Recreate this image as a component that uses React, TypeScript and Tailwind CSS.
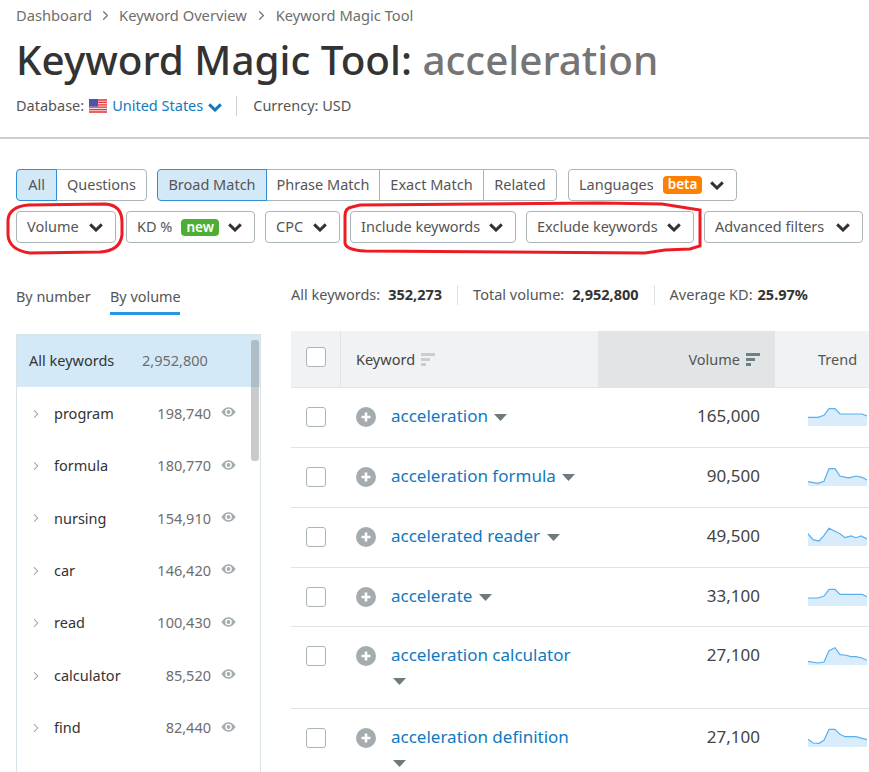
import React from 'react';
import { ChevronRight } from 'lucide-react';

const FONT = "font-['Noto_Sans','Open_Sans',sans-serif]";

const KEYWORD_ROWS = [
  { name: 'acceleration', volume: '165,000', h: 'h-[60px]', pts: '0,11.3 10,11.3 16,9.3 21,2.7 27,2.7 32,8 54,8 59,10' },
  { name: 'acceleration formula', volume: '90,500', h: 'h-[60px]', pts: '0,15.7 10,17.3 16,15.3 21,2.7 27,2.7 32,10 39,11.7 42,11.7 48,10 54,11.3 59,14' },
  { name: 'accelerated reader', volume: '49,500', h: 'h-[60px]', pts: '0,7.7 5,13.7 11,15 16,9.3 21,2.3 27,5.3 32,7.7 37,11.7 43,10 48,11.7 53,10 59,13' },
  { name: 'accelerate', volume: '33,100', h: 'h-[59px]', pts: '0,12 10,12 16,10 21,3.3 27,3.3 32,8.3 54,8.3 59,10.7' },
  { name: 'acceleration calculator', volume: '27,100', h: 'h-[82px]', pts: '0,16.3 10,18 16,17 21,5.7 27,2.7 32,9.7 37,10 43,11.7 48,11.7 54,13 59,15.3' },
  { name: 'acceleration definition', volume: '27,100', h: 'h-[82px]', pts: '0,12.3 5,16 11,16.3 16,13.3 21,2.3 27,2.3 32,7.3 37,9.7 48,9.7 54,11.3 59,12.7' },
];

const SIDE_ROWS = [
  ['program', '198,740'],
  ['formula', '180,770'],
  ['nursing', '154,910'],
  ['car', '146,420'],
  ['read', '100,430'],
  ['calculator', '85,520'],
  ['find', '82,440'],
];

const Chevron = ({ className = 'text-[#333]' }: { className?: string }) => (
  <svg width="14" height="9" viewBox="0 0 14 9" fill="none" stroke="currentColor" strokeWidth="3" className={`shrink-0 ${className}`}>
    <path d="M1.2 1.4L7 7L12.8 1.4" />
  </svg>
);

const FilterButton = ({ label, width, badge }: { label: string; width: string; badge?: React.ReactNode }) => (
  <button className={`${width} h-[32px] pl-[10px] pr-[12px] flex items-center justify-between border border-[#abb5b8] rounded-[4px] text-[#555] text-[14.5px] bg-white`}>
    <span className="flex items-center gap-[9px] whitespace-nowrap">{label}{badge}</span>
    <Chevron />
  </button>
);

const Segment = ({ label, width, active, first, last }: { label: string; width: string; active?: boolean; first?: boolean; last?: boolean }) => (
  <div
    className={`${width} h-[32px] flex items-center justify-center text-[14.5px] text-[#555] border whitespace-nowrap -ml-px first:ml-0
      ${active ? 'bg-[#d3e9f8] border-[#2d8fd5] z-10' : 'bg-white border-[#abb5b8]'}
      ${first ? 'rounded-l-[4px]' : ''} ${last ? 'rounded-r-[4px]' : ''}`}
  >
    {label}
  </div>
);

const SortIcon = ({ className }: { className: string }) => (
  <svg width="14" height="13" viewBox="0 0 14 13" className={className} fill="currentColor">
    <rect x="0" y="0" width="14" height="3" />
    <rect x="0" y="5" width="9" height="3" />
    <rect x="0" y="10" width="5" height="3" />
  </svg>
);

const Checkbox = () => <div className="w-[20px] h-[20px] rounded-[3px] border border-[#abb5b8] bg-white" />;

const PlusIcon = () => (
  <svg width="20" height="20" viewBox="0 0 20 20" className="shrink-0 mt-[4px]">
    <circle cx="10" cy="10" r="10" fill="#a4acaf" />
    <path d="M10 5.5v9M5.5 10h9" stroke="#fff" strokeWidth="2.6" />
  </svg>
);

const EyeIcon = () => (
  <svg width="15" height="10" viewBox="0 0 15 10" className="ml-[10px] mr-[24px] -mt-[3px] shrink-0">
    <path d="M0.3 5C3 1.5 5 0.3 7.5 0.3S12 1.5 14.7 5C12 8.5 10 9.7 7.5 9.7S3 8.5 0.3 5Z" fill="#a4acaf" />
    <circle cx="7.5" cy="5" r="3.3" fill="#fff" />
    <circle cx="7.5" cy="5" r="1.9" fill="#a4acaf" />
  </svg>
);

const Caret = () => (
  <svg width="13" height="7" viewBox="0 0 13 7" className="inline-block ml-[2px] align-middle">
    <path d="M0 0h13L6.5 7z" fill="#6d7a7e" />
  </svg>
);

const Spark = ({ pts }: { pts: string }) => (
  <svg width="59" height="20" viewBox="0 0 59 20" className="shrink-0">
    <polygon points={`0,20 ${pts} 59,20`} fill="#d8ecfb" />
    <polyline points={pts} fill="none" stroke="#5aafee" strokeWidth="1.2" />
  </svg>
);

const UsFlag = () => (
  <svg width="18" height="14" viewBox="0 0 18 14" className="shrink-0">
    <rect width="18" height="14" fill="#f6dcdc" />
    <path d="M0 1h18M0 3.4h18M0 5.8h18M0 8.2h18M0 10.6h18M0 13h18" stroke="#e23a40" strokeWidth="1.3" />
    <rect width="9" height="7.5" fill="#4b55b0" />
  </svg>
);

export default function App() {
  return (
    <div className={`${FONT} relative w-[869px] h-[772px] overflow-hidden bg-white text-[#333]`}>
      {/* header */}
      <div className="h-[139px] border-b-2 border-[#cdcdcd] px-4">
        <div className="h-[30px] flex items-center text-[14.7px] text-[#6e6e6e]">
          <span>Dashboard</span>
          <ChevronRight size={15} strokeWidth={2} className="mx-[6px] text-[#777]" />
          <span>Keyword Overview</span>
          <ChevronRight size={15} strokeWidth={2} className="mx-[7px] text-[#777]" />
          <span>Keyword Magic Tool</span>
        </div>
        <h1 className="h-[60px] flex items-center text-[40.4px] font-medium whitespace-nowrap">
          Keyword Magic Tool:&nbsp;<span className="text-[#757575]">acceleration</span>
        </h1>
        <div className="h-[32px] flex items-center text-[14.5px] text-[#555]">
          <span>Database:</span>
          <span className="ml-[5px]"><UsFlag /></span>
          <span className="ml-[5px] text-[#0f79c0]">United States</span>
          <Chevron className="ml-[5px] mt-[2px] text-[#0f79c0]" />
          <span className="w-px h-[20px] bg-[#d0d0d0] ml-[14px] mr-[16px]" />
          <span>Currency: USD</span>
        </div>
      </div>

      {/* filters */}
      <div className="pl-4 pt-[30px]">
        <div className="flex gap-[11px]">
          <div className="flex">
            <Segment label="All" width="w-[41px]" active first />
            <Segment label="Questions" width="w-[91px]" last />
          </div>
          <div className="flex ml-[-1px]">
            <Segment label="Broad Match" width="w-[110px]" active first />
            <Segment label="Phrase Match" width="w-[114px]" />
            <Segment label="Exact Match" width="w-[105px]" />
            <Segment label="Related" width="w-[74px]" last />
          </div>
          <FilterButton
            label="Languages"
            width="w-[169px]"
            badge={<span className="px-[5px] h-[18px] leading-[17px] rounded-[4px] bg-[#ff7f00] text-white text-[13.5px] font-semibold">beta</span>}
          />
        </div>
        <div className="flex gap-[10px] mt-[10px]">
          <FilterButton label="Volume" width="w-[100px]" />
          <FilterButton
            label="KD %"
            width="w-[129px]"
            badge={<span className="px-[5px] h-[17px] leading-[16px] rounded-[4px] bg-[#4cae33] text-white text-[13.5px] font-semibold">new</span>}
          />
          <FilterButton label="CPC" width="w-[75px]" />
          <FilterButton label="Include keywords" width="w-[166px]" />
          <FilterButton label="Exclude keywords" width="w-[168px]" />
          <FilterButton label="Advanced filters" width="w-[159px]" />
        </div>
      </div>

      {/* body */}
      <div className="flex pl-4 mt-[37px]">
        <aside className="w-[245px] shrink-0 mr-[30px]">
          <div className="h-[35px] flex items-start gap-[20px] text-[14.4px] text-[#555]">
            <span className="w-[74px] whitespace-nowrap pt-[6px]">By number</span>
            <span className="w-[70px] h-[35px] border-b-[3px] border-b-[#2595e6] whitespace-nowrap pt-[6px]">By volume</span>
          </div>
          <div className="relative mt-[19px] border border-[#d8e3e8] border-b-0 h-[500px] overflow-hidden">
            <div className="h-[52px] pl-[12px] flex items-center bg-[#d3e9f8] text-[14.5px]">
              <span className="w-[113px] whitespace-nowrap">All keywords</span>
              <span className="text-[#6e6e6e]">2,952,800</span>
            </div>
            {SIDE_ROWS.map(([name, vol]) => (
              <div key={name} className="h-[52.4px] pt-[1px] flex items-center text-[14.5px]">
                <ChevronRight size={14} strokeWidth={1.8} className="ml-[12px] text-[#8d989c] shrink-0" />
                <span className="ml-[11px] flex-1">{name}</span>
                <span className="text-[#6e6e6e]">{vol}</span>
                <EyeIcon />
              </div>
            ))}
            {/* scrollbar thumb */}
            <div className="absolute right-[1px] top-[5px] w-[8px] h-[121px] rounded-[3px] bg-[#7a7a7a]/40" />
          </div>
        </aside>

        <main className="flex-1 min-w-0">
          <div className="h-[20px] mt-[5px] flex items-center text-[14.5px] text-[#555] whitespace-nowrap">
            <span>All keywords:</span>
            <b className="ml-[8px] text-[14.5px] text-[#333]">352,273</b>
            <span className="w-px h-[20px] bg-[#e0e0e0] mx-[15px]" />
            <span>Total volume:</span>
            <b className="ml-[8px] text-[14.5px] text-[#333]">2,952,800</b>
            <span className="w-px h-[20px] bg-[#e0e0e0] mx-[15px]" />
            <span>Average KD:</span>
            <b className="ml-[5px] text-[14.5px] text-[#333]">25.97%</b>
          </div>

          <div className="mt-[26px] w-[578px]">
            <div className="h-[57px] flex bg-[#f0f2f4] border-b border-[#dfe5e6] text-[14.5px]">
              <div className="w-[50px] border-r border-[#dfe5e6] pl-[15px] pt-[16px]"><Checkbox /></div>
              <div className="w-[257px] pl-[15px] pt-[18px] flex items-start gap-[6px] text-[#444]">
                Keyword <SortIcon className="text-[#c9cfd1] mt-[4px]" />
              </div>
              <div className="w-[177px] bg-[#e1e5e6] pr-[15px] pt-[18px] flex items-start justify-end gap-[6px] text-[#555]">
                Volume <SortIcon className="text-[#6d8088] mt-[4px]" />
              </div>
              <div className="flex-1 pl-[43px] pt-[18px] text-[#555]">Trend</div>
            </div>
            {KEYWORD_ROWS.map((row) => (
              <div key={row.name} className={`${row.h} flex border-b border-[#dfe5e6]`}>
                <div className="w-[50px] pl-[15px] pt-[19px]"><Checkbox /></div>
                <div className="w-[257px] pl-[15px] pt-[15px] flex items-start gap-[15px]">
                  <PlusIcon />
                  <span className="w-[190px] text-[17px] leading-[25px] text-[#0f79c0]">
                    {row.name} <Caret />
                  </span>
                </div>
                <div className="w-[162px] pt-[15px] text-right text-[17px] text-[#444] leading-[25px]">{row.volume}</div>
                <div className="pl-[48px] pt-[18px]"><Spark pts={row.pts} /></div>
              </div>
            ))}
          </div>
        </main>
      </div>

      {/* hand drawn annotations */}
      <svg width="869" height="772" className="absolute inset-0 pointer-events-none" fill="none" stroke="#ed1c24" strokeWidth="3">
        <path d="M28 205L105 204Q122 205 122 222L122 235Q120 251 100 252L30 253Q9 250 8 235L8 220Q9 207 28 205Z" />
        <path d="M352 207Q345 208 345 216L345 243Q346 250 365 251L645 253L665 250L690 249L700 246L700 210L662 204L600 203L360 205Z" />
      </svg>
    </div>
  );
}
